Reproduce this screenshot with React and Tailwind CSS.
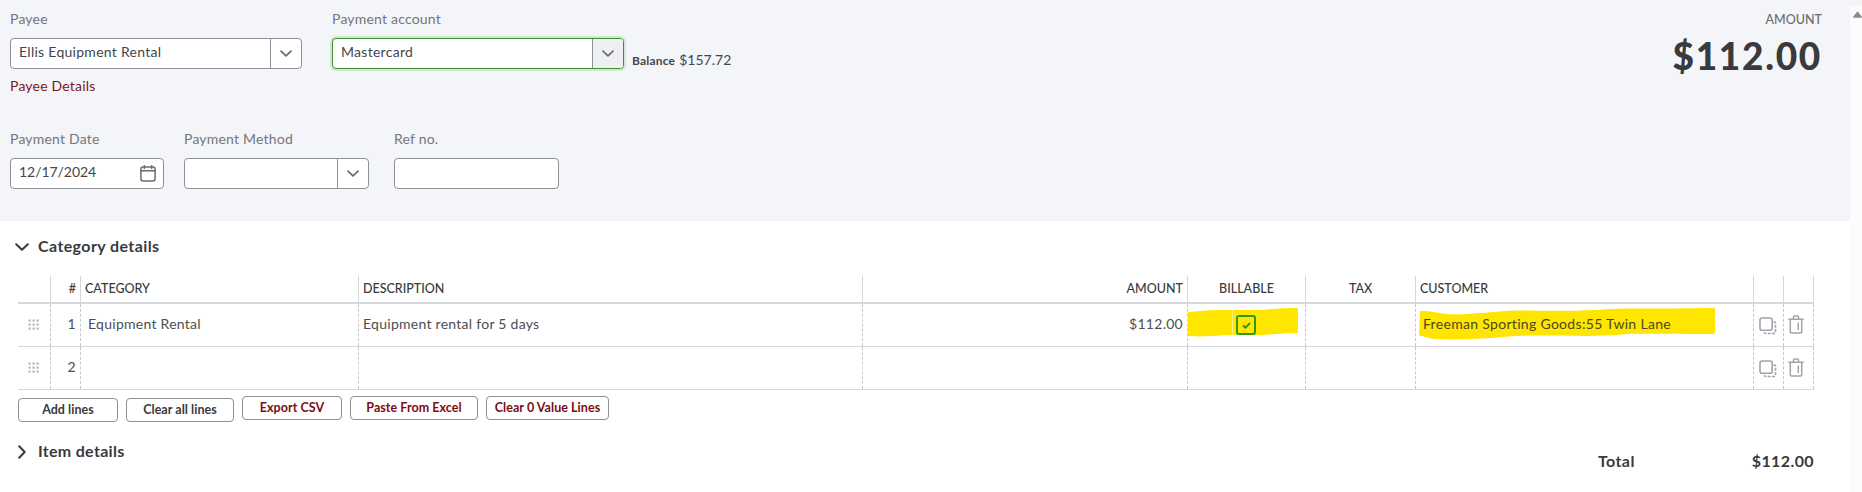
const columns = [
  { key: 'grip', label: '', head: 'w-[33px]', cell: 'w-[33px]' },
  { key: 'num', label: '#', head: 'w-[30px] justify-end pr-1', cell: 'w-[30px] justify-end pr-1' },
  { key: 'category', label: 'CATEGORY', head: 'w-[278px] pl-1', cell: 'w-[278px] pl-[7px]' },
  { key: 'description', label: 'DESCRIPTION', head: 'w-[504px] pl-1', cell: 'w-[504px] pl-1' },
  { key: 'amount', label: 'AMOUNT', head: 'w-[325px] justify-end pr-1', cell: 'w-[325px] justify-end pr-1' },
  { key: 'billable', label: 'BILLABLE', head: 'w-[118px] justify-center', cell: 'w-[118px]' },
  { key: 'tax', label: 'TAX', head: 'w-[110px] justify-center', cell: 'w-[110px]' },
  { key: 'customer', label: 'CUSTOMER', head: 'w-[338px] pl-1', cell: 'w-[338px] pl-[7px]' },
  { key: 'copy', label: '', head: 'w-[30px]', cell: 'w-[30px]' },
  { key: 'trash', label: '', head: 'w-[30px]', cell: 'w-[30px]' },
]

const rows = [
  {
    num: '1',
    category: 'Equipment Rental',
    description: 'Equipment rental for 5 days',
    amount: '$112.00',
    billable: true,
    customer: 'Freeman Sporting Goods:55 Twin Lane',
  },
  { num: '2' },
]

function Chevron({ className }) {
  return (
    <svg viewBox="0 0 14 8" className={className} fill="none" stroke="currentColor" strokeWidth="2" strokeLinecap="round" strokeLinejoin="round">
      <path d="M1.2 1.2 7 6.7l5.8-5.500" />
    </svg>
  )
}

function CalendarIcon() {
  return (
    <svg width="16" height="17" viewBox="0 0 16 17" fill="none" stroke="#6b6c72" strokeWidth="1.5" strokeLinecap="round">
      <rect x="0.9" y="2" width="14.2" height="14" rx="2.2" />
      <path d="M1 5.700h14M4.300.8v2.600M11.700.8v2.600" />
    </svg>
  )
}

function GripIcon() {
  return (
    <svg width="12" height="12" viewBox="0 0 12 12" fill="#b4b8bf">
      {[0.5, 4.5, 8.5].map((y) => [0.5, 4.5, 8.5].map((x) => <rect key={`${x}-${y}`} x={x} y={y} width="2.2" height="2.2" />))}
    </svg>
  )
}

function CopyIcon() {
  return (
    <svg width="18" height="18" viewBox="0 0 18 18" fill="none" stroke="#a0a4ab" strokeWidth="1.6">
      <rect x="1" y="1" width="12.2" height="12.2" rx="2" />
      <path d="M14.500 4.800c1.400 0 2 .7 2 1.900v7.600c0 1.400-.8 2.200-2.200 2.200H7c-1.300 0-2-.7-2.200-2" strokeDasharray="3 1.2" />
    </svg>
  )
}

function TrashIcon() {
  return (
    <svg width="16" height="19" viewBox="0 0 16 19" fill="none" stroke="#a0a4ab" strokeWidth="1.5" strokeLinecap="round" strokeLinejoin="round">
      <path d="M.8 4.200h14.400M5.500 4V1.800c0-.6.3-.9.900-.9h3.200c.6 0 .9.300.9.900V4M2.300 4.500v12.300c0 .8.400 1.200 1.200 1.200h9c.8 0 1.200-.4 1.200-1.200V4.500M10.300 8v6.500" />
    </svg>
  )
}

function Field({ label, children }) {
  return (
    <div>
      <div className="h-[38px] pt-[9px] text-[14px] leading-5 tracking-[0.2px] text-[#75767c]">{label}</div>
      {children}
    </div>
  )
}

function Select({ value, className, focused }) {
  return (
    <div
      className={`flex h-[31px] overflow-hidden rounded border bg-white ${focused ? 'border-[#3f8f35] shadow-[0_0_0_2px_#cfe8cf]' : 'border-[#8d9096]'} ${className}`}
    >
      <div className="flex-1 pl-2 text-[14px] leading-[26px] tracking-[0.28px] text-[#44464a]">{value}</div>
      <div className={`flex w-[31px] items-center justify-center border-l border-[#8d9096] text-[#6b6c72] ${focused ? 'bg-[#eeeff0]' : ''}`}>
        <Chevron className="h-[7px] w-[12px]" />
      </div>
    </div>
  )
}

function BillableCell() {
  return (
    <>
      <svg className="absolute top-1 left-0" width="112" height="30" viewBox="0 0 112 30">
        <path d="M0 4c14-1 18-2 34-2 20 0 30 .5 46-.6C90 .4 98 0 110 0v25c-14 0-20 1-34 2-16 .5-28-.5-42 .2C22 28 16 29 0 28z" fill="#ffe600" />
        <path d="M44.500 2v25" stroke="#fff07a" />
      </svg>
      <span className="relative ml-12 flex h-5 w-5 items-center justify-center rounded-[3px] border-2 border-[#2c9a14]">
        <svg width="9" height="7" viewBox="0 0 9 7" fill="none" stroke="#2c9a14" strokeWidth="2">
          <path d="M1 3.400l2.500 2.200L8 1" />
        </svg>
      </span>
    </>
  )
}

function CustomerCell({ name }) {
  return (
    <>
      <svg className="absolute top-1 left-[3px]" width="297" height="32" viewBox="0 0 297 32">
        <path d="M1 3c6 0 10 0 14 1 12 3 28 3 44 1 22-1 28-3 50-2.500 26 .5 44 .5 68-.5 20-2 44-1.500 70-1.500C262 .5 276 0 295 0c1 0 1 1 1 2v22c0 1-1 2-2 2-36 0-54-.5-86 0-30 3-54 1.500-84 1.500-20 0-34 .5-52 2.500-18 1-38 2-56 1-8-.5-10-3-16-3.500z" fill="#ffe600" />
      </svg>
      <span className="relative -mt-1 tracking-[0.31px] text-[#4a4820]">{name}</span>
    </>
  )
}

function cellContent(key, row) {
  if (key === 'grip') return <span className="ml-[10px]"><GripIcon /></span>
  if (key === 'copy') return <span className="mt-[2px] ml-[5px]"><CopyIcon /></span>
  if (key === 'trash') return <span className="-mt-[2px] ml-1"><TrashIcon /></span>
  if (key === 'billable') return row.billable ? <BillableCell /> : null
  if (key === 'customer') return row.customer ? <CustomerCell name={row.customer} /> : null
  return row[key] ? <span className="-mt-1">{row[key]}</span> : null
}

function DetailsTable() {
  return (
    <div className="ml-[18px] w-[1796px]">
      <div className="flex h-[28px] border-b-2 border-[#d4d7dc] text-[12.5px] font-medium text-[#393a3d]">
        {columns.map((col) => (
          <div key={col.key} className={`flex shrink-0 items-center border-r border-[#d4d7dc] pt-px ${col.head}`}>
            {col.label}
          </div>
        ))}
      </div>
      {rows.map((row) => (
        <div key={row.num} className="flex h-[43px] border-b border-[#d4d7dc] text-[14px] tracking-[0.27px] text-[#4c4e53]">
          {columns.map((col) => (
            <div key={col.key} className={`relative flex shrink-0 items-center border-r border-dashed border-[#c3c6cc] ${col.cell}`}>
              {cellContent(col.key, row)}
            </div>
          ))}
        </div>
      ))}
    </div>
  )
}

function LineButton({ children, className }) {
  return (
    <button className={`h-6 rounded border border-[#8d9096] bg-white text-center text-[12.5px] leading-none font-bold tracking-[0.05px] ${className}`}>
      {children}
    </button>
  )
}

export default function App() {
  return (
    <div className="flex h-[492px] w-[1862px] overflow-hidden bg-white font-[Lato,sans-serif]">
      <main className="w-[1850px]">
        <section className="flex h-[221px] justify-between bg-[#f3f5f9] pl-[10px]">
          <div>
            <div className="flex h-[120px]">
              <Field label="Payee">
                <Select value="Ellis Equipment Rental" className="w-[292px]" />
                <div className="mt-[7px] text-[14px] leading-5 tracking-[0.2px] text-[#7d151b]">Payee Details</div>
              </Field>
              <div className="ml-[30px]">
                <Field label="Payment account">
                  <Select value="Mastercard" className="w-[292px]" focused />
                </Field>
              </div>
              <div className="mt-[49px] ml-2 flex h-5 items-baseline gap-1 text-[#44464a]">
                <span className="text-[12px] font-bold tracking-[0.2px]">Balance</span>
                <span className="text-[14px]">$157.72</span>
              </div>
            </div>
            <div className="flex">
              <Field label="Payment Date">
                <div className="flex h-[31px] w-[154px] items-center justify-between rounded border border-[#8d9096] bg-white pr-[7px] pl-2">
                  <span className="-mt-1 text-[14px] tracking-[-0.05px] text-[#44464a]">12/17/2024</span>
                  <CalendarIcon />
                </div>
              </Field>
              <div className="ml-5">
                <Field label="Payment Method">
                  <Select value="" className="w-[185px]" />
                </Field>
              </div>
              <div className="ml-[25px]">
                <Field label="Ref no.">
                  <div className="h-[31px] w-[165px] rounded border border-[#8d9096] bg-white" />
                </Field>
              </div>
            </div>
          </div>
          <div className="pt-[11px] pr-7 text-right">
            <div className="text-[12.5px] leading-[18px] font-medium text-[#6b6c72]">AMOUNT</div>
            <div className="mt-[5px] text-[37px] leading-[44px] font-black tracking-[1.7px] text-[#393a3d]">$112.00</div>
          </div>
        </section>

        <section>
          <div className="flex h-[55px] items-start gap-[9px] pt-[14px] pl-[15px] text-[#393a3d]">
            <Chevron className="mt-[8px] h-[8px] w-[14px]" />
            <h2 className="text-[16px] leading-[22px] font-bold tracking-[0.4px]">Category details</h2>
          </div>
          <DetailsTable />
          <div className="mt-[6px] ml-[18px] flex items-start gap-2">
            <LineButton className="mt-[2px] w-[100px] text-[#393a3d]">Add lines</LineButton>
            <LineButton className="mt-[2px] w-[108px] text-[#393a3d]">Clear all lines</LineButton>
            <LineButton className="w-[100px] text-[#7d0d12]">Export CSV</LineButton>
            <LineButton className="w-[128px] text-[#7d0d12]">Paste From Excel</LineButton>
            <LineButton className="w-[123px] text-[#7d0d12]">Clear 0 Value Lines</LineButton>
          </div>
          <div className="mt-[18px] flex pl-[15px] text-[#393a3d]">
            <Chevron className="mt-2 h-[8px] w-[14px] -rotate-90" />
            <h2 className="ml-[9px] text-[16px] leading-[22px] font-bold tracking-[0.3px]">Item details</h2>
            <div className="mt-[10px] mr-9 ml-auto flex w-[216px] justify-between text-[16px] leading-[22px] font-bold tracking-[0.4px]">
              <span>Total</span>
              <span>$112.00</span>
            </div>
          </div>
        </section>
      </main>
      <aside className="w-3 border-t-[6px] border-[#f3f5f9] bg-[#fcfcfc]">
        <svg className="mt-[5px] ml-[3px]" width="9" height="7" viewBox="0 0 9 7">
          <path d="M4.500.8 8.600 6.200H.4z" fill="#8b8b8b" stroke="#8b8b8b" strokeLinejoin="round" />
        </svg>
      </aside>
    </div>
  )
}
